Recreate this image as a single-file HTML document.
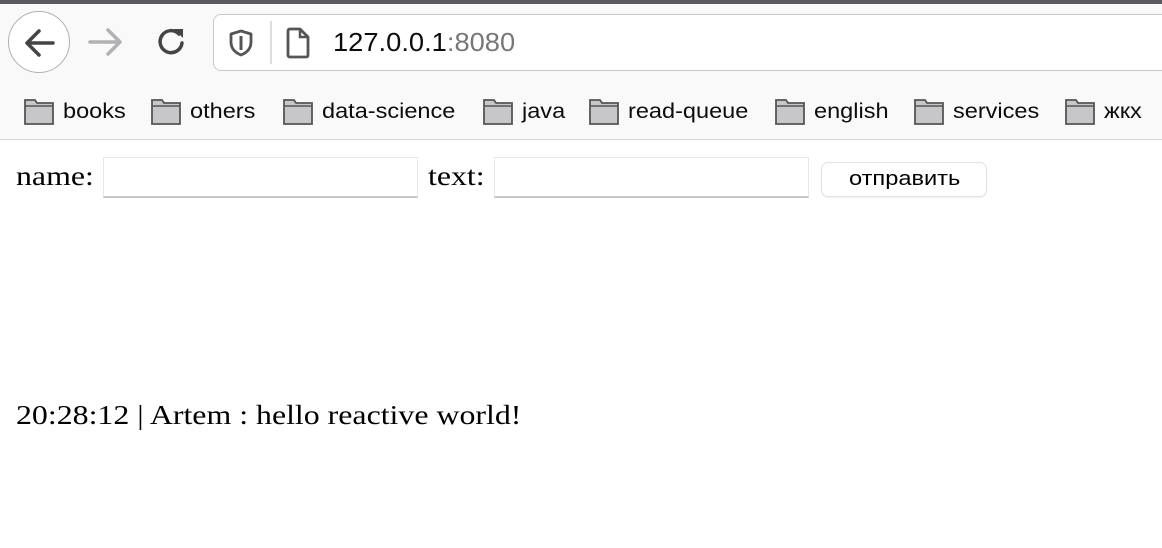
<!DOCTYPE html>
<html><head><meta charset="utf-8"><style>
body{margin:0;width:1162px;height:548px;overflow:hidden;background:#fff;position:relative;font-family:"Liberation Sans",sans-serif}
.top{position:absolute;left:0;top:0;width:1162px;height:139px;background:#f9f9fa;border-bottom:1px solid #d7d7db}
.tabline{position:absolute;top:0;left:0;width:1162px;height:4px;background:#5a5a5e}
.back{position:absolute;left:8px;top:11px;width:62px;height:62px;border:1.5px solid #b1b1b3;border-radius:50%;background:#fff;box-sizing:border-box}
.url{position:absolute;left:213px;top:14px;width:960px;height:57px;border:1.5px solid #c8c8cc;border-radius:8px;background:#fff;box-sizing:border-box}
.bm{position:absolute;top:96px;font-size:21px;color:#0c0c0d;display:flex;align-items:center}
.bm svg{margin-right:8px}
.bm span{display:inline-block;transform:scaleX(1.12);transform-origin:left;position:relative;top:1px}
.lab{position:absolute;font-family:"Liberation Serif",serif;font-size:27px;color:#000;transform:scaleX(1.18);transform-origin:left;white-space:nowrap}
.inp{position:absolute;top:157px;height:41px;width:315px;border:1px solid #e8e8e8;border-bottom:2px solid #c8c8c8;box-sizing:border-box;background:#fff}
.btn{position:absolute;left:822px;top:163px;width:164px;height:33px;border-radius:6px;box-shadow:0 0 0 1px #e2e2e2,0 1px 2px rgba(0,0,0,.15);background:#fff}
.btn span{position:absolute;left:27px;top:5px;font-size:20px;transform:scaleX(1.18);transform-origin:left}
</style></head><body>
<div class="top">
<div class="tabline"></div>
<div class="back"><svg width="60" height="60" viewBox="0 0 60 60"><path d="M44 31H18M30 19L18 31L30 43" stroke="#444" stroke-width="3.5" fill="none" stroke-linecap="round" stroke-linejoin="round"/></svg></div>
<svg style="position:absolute;left:86px;top:24px" width="40" height="36" viewBox="0 0 40 36"><path d="M4 18H34M22 6L34 18L22 30" stroke="#b1b1b3" stroke-width="3.5" fill="none" stroke-linecap="round" stroke-linejoin="round"/></svg>
<svg style="position:absolute;left:152px;top:24px" width="40" height="36" viewBox="0 0 40 36"><path d="M30 19A11 11 0 1 1 27 10" stroke="#444" stroke-width="3.5" fill="none" stroke-linecap="round"/><path d="M22 5L31 5L31 14Z" fill="#444"/></svg>
<div class="url">
<svg style="position:absolute;left:14px;top:14px" width="26" height="28" viewBox="0 0 26 28"><path d="M13 2L23 5V13C23 20 18 24 13 26C8 24 3 20 3 13V5Z" stroke="#555" stroke-width="2.8" fill="none" stroke-linejoin="round"/><path d="M13 7V21" stroke="#555" stroke-width="3"/></svg>
<div style="position:absolute;left:56px;top:6px;width:1.5px;height:43px;background:#ddd"></div>
<svg style="position:absolute;left:70px;top:11px" width="28" height="34" viewBox="0 0 28 34"><path d="M4 5Q4 3 6 3H16L24 11V29Q24 31 22 31H6Q4 31 4 29Z" stroke="#555" stroke-width="2.8" fill="none" stroke-linejoin="round"/><path d="M16 3V11H24" stroke="#555" stroke-width="2.5" fill="none"/></svg>
<div style="position:absolute;left:119px;top:12px;font-size:26px;color:#0c0c0d;transform:scaleX(1.05);transform-origin:left">127.0.0.1<span style="color:#777">:8080</span></div>
</div>
</div>
<div class="bm" style="left:23px"><svg width="32" height="30" viewBox="0 0 32 30"><path d="M2 4H12L14 7H30V28H2Z" fill="#c7c7c9" stroke="#555" stroke-width="1.8"/><path d="M2 10H30" stroke="#555" stroke-width="1.5"/></svg><span>books</span></div>
<div class="bm" style="left:150px"><svg width="32" height="30" viewBox="0 0 32 30"><path d="M2 4H12L14 7H30V28H2Z" fill="#c7c7c9" stroke="#555" stroke-width="1.8"/><path d="M2 10H30" stroke="#555" stroke-width="1.5"/></svg><span>others</span></div>
<div class="bm" style="left:282px"><svg width="32" height="30" viewBox="0 0 32 30"><path d="M2 4H12L14 7H30V28H2Z" fill="#c7c7c9" stroke="#555" stroke-width="1.8"/><path d="M2 10H30" stroke="#555" stroke-width="1.5"/></svg><span>data-science</span></div>
<div class="bm" style="left:482px"><svg width="32" height="30" viewBox="0 0 32 30"><path d="M2 4H12L14 7H30V28H2Z" fill="#c7c7c9" stroke="#555" stroke-width="1.8"/><path d="M2 10H30" stroke="#555" stroke-width="1.5"/></svg><span>java</span></div>
<div class="bm" style="left:588px"><svg width="32" height="30" viewBox="0 0 32 30"><path d="M2 4H12L14 7H30V28H2Z" fill="#c7c7c9" stroke="#555" stroke-width="1.8"/><path d="M2 10H30" stroke="#555" stroke-width="1.5"/></svg><span>read-queue</span></div>
<div class="bm" style="left:774px"><svg width="32" height="30" viewBox="0 0 32 30"><path d="M2 4H12L14 7H30V28H2Z" fill="#c7c7c9" stroke="#555" stroke-width="1.8"/><path d="M2 10H30" stroke="#555" stroke-width="1.5"/></svg><span>english</span></div>
<div class="bm" style="left:913px"><svg width="32" height="30" viewBox="0 0 32 30"><path d="M2 4H12L14 7H30V28H2Z" fill="#c7c7c9" stroke="#555" stroke-width="1.8"/><path d="M2 10H30" stroke="#555" stroke-width="1.5"/></svg><span>services</span></div>
<div class="bm" style="left:1064px"><svg width="32" height="30" viewBox="0 0 32 30"><path d="M2 4H12L14 7H30V28H2Z" fill="#c7c7c9" stroke="#555" stroke-width="1.8"/><path d="M2 10H30" stroke="#555" stroke-width="1.5"/></svg><span>жкх</span></div>
<div class="lab" style="left:16px;top:161px">name:</div>
<div class="inp" style="left:103px"></div>
<div class="lab" style="left:428px;top:161px">text:</div>
<div class="inp" style="left:494px"></div>
<div class="btn"><span>отправить</span></div>
<div class="lab" style="left:16px;top:400px">20:28:12 | Artem : hello reactive world!</div>
</body></html>
